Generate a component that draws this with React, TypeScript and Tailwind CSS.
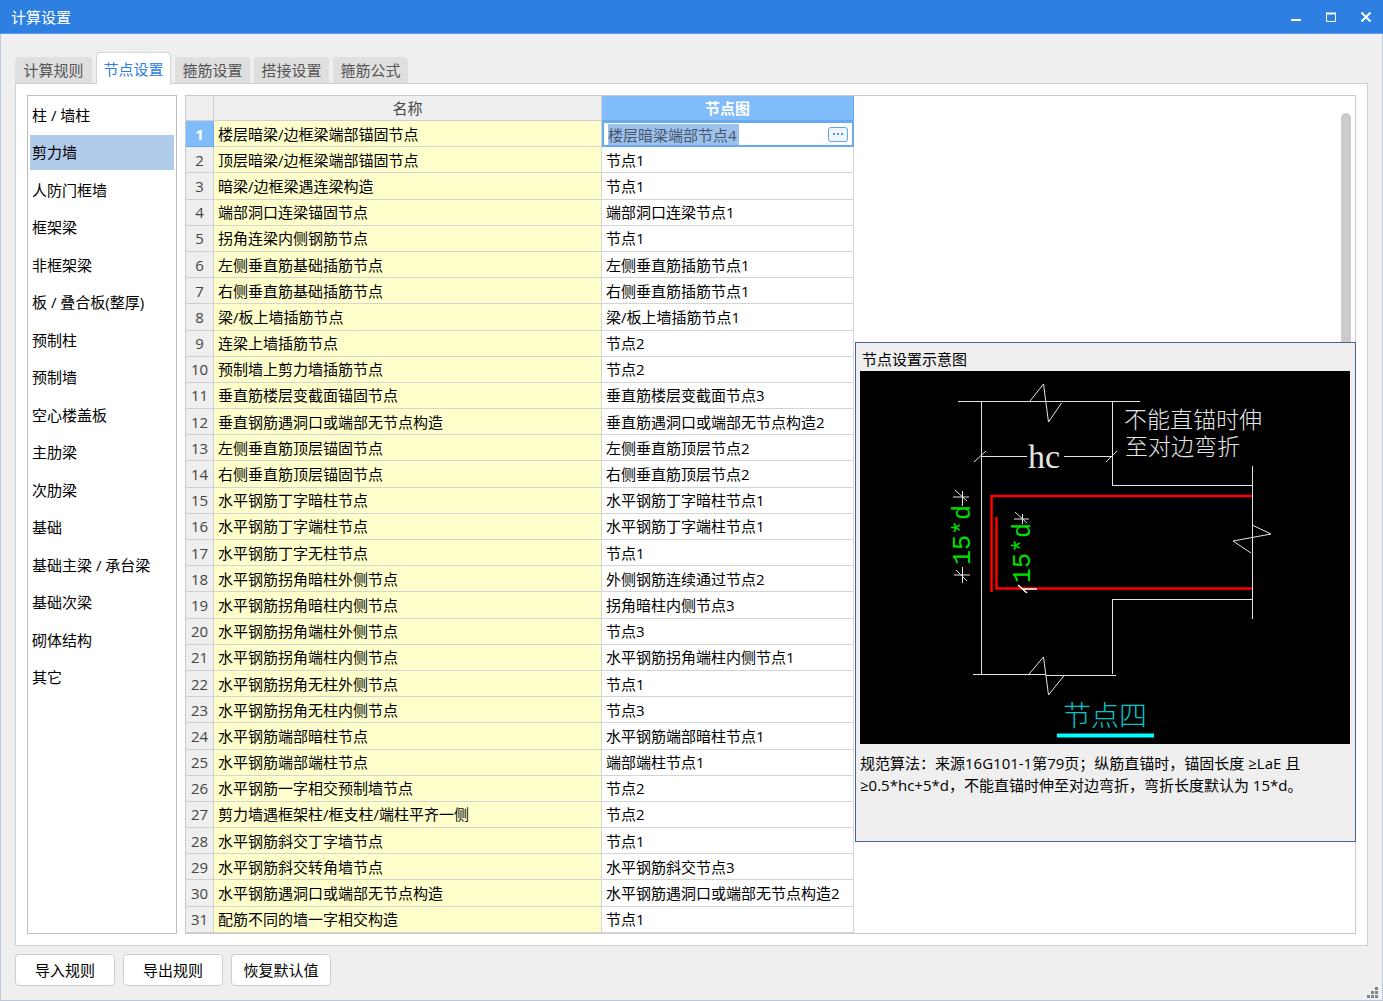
import React from 'react';

interface NodeRow {
  name: string;
  node: string;
}

const tabs = ['计算规则', '节点设置', '箍筋设置', '搭接设置', '箍筋公式'];

const categories = [
  '柱 / 墙柱',
  '剪力墙',
  '人防门框墙',
  '框架梁',
  '非框架梁',
  '板 / 叠合板(整厚)',
  '预制柱',
  '预制墙',
  '空心楼盖板',
  '主肋梁',
  '次肋梁',
  '基础',
  '基础主梁 / 承台梁',
  '基础次梁',
  '砌体结构',
  '其它',
];

const rows: NodeRow[] = [
  { name: '楼层暗梁/边框梁端部锚固节点', node: '楼层暗梁端部节点4' },
  { name: '顶层暗梁/边框梁端部锚固节点', node: '节点1' },
  { name: '暗梁/边框梁遇连梁构造', node: '节点1' },
  { name: '端部洞口连梁锚固节点', node: '端部洞口连梁节点1' },
  { name: '拐角连梁内侧钢筋节点', node: '节点1' },
  { name: '左侧垂直筋基础插筋节点', node: '左侧垂直筋插筋节点1' },
  { name: '右侧垂直筋基础插筋节点', node: '右侧垂直筋插筋节点1' },
  { name: '梁/板上墙插筋节点', node: '梁/板上墙插筋节点1' },
  { name: '连梁上墙插筋节点', node: '节点2' },
  { name: '预制墙上剪力墙插筋节点', node: '节点2' },
  { name: '垂直筋楼层变截面锚固节点', node: '垂直筋楼层变截面节点3' },
  { name: '垂直钢筋遇洞口或端部无节点构造', node: '垂直筋遇洞口或端部无节点构造2' },
  { name: '左侧垂直筋顶层锚固节点', node: '左侧垂直筋顶层节点2' },
  { name: '右侧垂直筋顶层锚固节点', node: '右侧垂直筋顶层节点2' },
  { name: '水平钢筋丁字暗柱节点', node: '水平钢筋丁字暗柱节点1' },
  { name: '水平钢筋丁字端柱节点', node: '水平钢筋丁字端柱节点1' },
  { name: '水平钢筋丁字无柱节点', node: '节点1' },
  { name: '水平钢筋拐角暗柱外侧节点', node: '外侧钢筋连续通过节点2' },
  { name: '水平钢筋拐角暗柱内侧节点', node: '拐角暗柱内侧节点3' },
  { name: '水平钢筋拐角端柱外侧节点', node: '节点3' },
  { name: '水平钢筋拐角端柱内侧节点', node: '水平钢筋拐角端柱内侧节点1' },
  { name: '水平钢筋拐角无柱外侧节点', node: '节点1' },
  { name: '水平钢筋拐角无柱内侧节点', node: '节点3' },
  { name: '水平钢筋端部暗柱节点', node: '水平钢筋端部暗柱节点1' },
  { name: '水平钢筋端部端柱节点', node: '端部端柱节点1' },
  { name: '水平钢筋一字相交预制墙节点', node: '节点2' },
  { name: '剪力墙遇框架柱/框支柱/端柱平齐一侧', node: '节点2' },
  { name: '水平钢筋斜交丁字墙节点', node: '节点1' },
  { name: '水平钢筋斜交转角墙节点', node: '水平钢筋斜交节点3' },
  { name: '水平钢筋遇洞口或端部无节点构造', node: '水平钢筋遇洞口或端部无节点构造2' },
  { name: '配筋不同的墙一字相交构造', node: '节点1' },
];

const TitleBar: React.FC = () => (
  <header className="flex h-[34px] shrink-0 items-center justify-between border-b border-[#5b9ce8] bg-[#2d80e2] pl-[11px] text-white">
    <h1>计算设置</h1>
    <div className="flex">
      <button aria-label="最小化" className="flex h-8 w-[35px] items-center justify-center">
        <svg width="12" height="12" viewBox="0 0 12 12" fill="none">
          <path d="M1 9h10" stroke="currentColor" strokeWidth="2" />
        </svg>
      </button>
      <button aria-label="最大化" className="flex h-8 w-[35px] items-center justify-center">
        <svg width="12" height="12" viewBox="0 0 12 12" fill="none" stroke="currentColor">
          <path d="M1.5 2v8.5h9V2" />
          <path d="M1 2.5h10" strokeWidth="2" />
        </svg>
      </button>
      <button aria-label="关闭" className="flex h-8 w-[35px] items-center justify-center">
        <svg width="12" height="12" viewBox="0 0 12 12" fill="none">
          <path d="M1.500 1.500l9 9M10.500 1.500l-9 9" stroke="currentColor" strokeWidth="2" />
        </svg>
      </button>
    </div>
  </header>
);

const NodeDiagram: React.FC = () => (
  <svg viewBox="860 371 490 373" className="block w-full bg-black" role="img" aria-label="节点四">
    {/* Column and beam outline */}
    <g fill="none" stroke="#e4e4e4" shapeRendering="crispEdges">
      <path d="M958 401.500H1140M981.500 401.500V674M1112.500 401.500V485.500H1252M1252.500 466V619M1252 599.500H1112.500V674M973 674.500H1046M1046 675.500H1116" />
      <path d="M981 456.500H1027M1064 456.500H1112" />
    </g>
    {/* Break marks and dimension ticks */}
    <g fill="none" stroke="#e4e4e4">
      <path d="M1030 401l13.500-17 5 38 13-19" />
      <path d="M1029 674l14.500-17 5 38 16-20" />
      <path d="M1252 525l19 9-38 7 18 12" />
      <path d="M974 462l12-11M1106 462l11-11" />
      <path d="M953 497h16M962.500 491v15M955 490l12 11" />
      <path d="M954 575h16M962.500 567v16M956 570l11 11" />
      <path d="M1014 519h15M1022.500 514v10M1015 512l12 11" />
    </g>
    {/* Rebar */}
    <g fill="none" stroke="#ff0000" strokeWidth="2.500">
      <path d="M1252 496H991.500V592" />
      <path d="M996.500 517V588.500H1252" />
    </g>
    <path d="M1022 589h15M1018 585l9 8" stroke="#ffffff" strokeWidth="1.500" />
    <text x="1028" y="468" fontSize="34" fill="#e4e4e4" className="font-['Liberation_Serif',serif]">hc</text>
    <g fontSize="25" fill="#00e000" className="font-['Liberation_Mono',monospace]">
      <text transform="translate(970 565) rotate(-90)">15*d</text>
      <text transform="translate(1030 583) rotate(-90)">15*d</text>
    </g>
    <g fontSize="23" fill="#e4e4e4" className="font-['Liberation_Serif','Noto_Sans_CJK_SC',sans-serif] font-light">
      <text x="1124" y="428">不能直锚时伸</text>
      <text x="1125" y="455">至对边弯折</text>
    </g>
    <text x="1063" y="726" fontSize="28" fill="#00c8c8" className="font-['Noto_Sans_CJK_SC',sans-serif] font-light">节点四</text>
    <path d="M1057 735.500h97" stroke="#00ffff" strokeWidth="4" />
  </svg>
);

const NodePreview: React.FC = () => (
  <aside className="absolute top-[246px] -right-px h-[500px] w-[501px] border border-[#46648f] bg-[#efefef] pr-[5px] pl-1">
    <h2 className="flex h-7 items-center px-0.5 pt-1">节点设置示意图</h2>
    <NodeDiagram />
    <p className="pt-2 leading-[22px]">
      规范算法：来源16G101-1第79页；纵筋直锚时，锚固长度 ≥LaE 且
      <br />
      ≥0.5*hc+5*d，不能直锚时伸至对边弯折，弯折长度默认为 15*d。
    </p>
  </aside>
);

const NodeTable: React.FC = () => (
  <table className="h-full w-[668px] table-fixed border-separate border-spacing-0">
    <colgroup>
      <col className="w-[28px]" />
      <col className="w-[388px]" />
      <col className="w-[252px]" />
    </colgroup>
    <thead>
      <tr className="h-[25px]">
        <th className="border-r border-b border-[#cfcfcf] bg-[#efefef] p-0" />
        <th className="border-r border-b border-[#cfcfcf] bg-[#efefef] p-0 font-normal text-[#444]">名称</th>
        <th className="border-r border-b border-[#67aaf0] bg-[#80bbfa] p-0 font-bold text-white">节点图</th>
      </tr>
    </thead>
    <tbody>
      {rows.map((row, i) => (
        <tr key={row.name} className="h-[26px]">
          <th
            scope="row"
            className={`border-r border-b p-0 ${
              i === 0
                ? 'border-[#67aaf0] bg-[#80bbfa] font-bold text-white'
                : 'border-[#cfcfcf] bg-[#efefef] font-normal text-[#444]'
            }`}
          >
            {i + 1}
          </th>
          <td className="border-r border-b border-[#d4d4d4] bg-[#ffffcc] py-0 pr-0 pl-1">{row.name}</td>
          {i === 0 ? (
            <td className="border-2 border-[#67aaf0] bg-white p-0">
              <div className="flex items-center justify-between pr-1 pl-1">
                <input
                  aria-label="节点图"
                  defaultValue={row.node}
                  className="h-[21px] w-[131px] bg-[#9dc1ed] text-[#46566c] outline-none"
                />
                <button
                  aria-label="选择节点"
                  className="flex h-[15px] w-5 items-center justify-center gap-0.5 rounded-[3px] border border-[#5ba8e8] bg-[#f0f6fc]"
                >
                  <span className="size-0.5 bg-[#4b97d8]" />
                  <span className="size-0.5 bg-[#4b97d8]" />
                  <span className="size-0.5 bg-[#4b97d8]" />
                </button>
              </div>
            </td>
          ) : (
            <td className="border-r border-b border-[#d4d4d4] bg-white py-0 pr-0 pl-1">{row.node}</td>
          )}
        </tr>
      ))}
    </tbody>
  </table>
);

export default function App() {
  const [activeTab, setActiveTab] = React.useState(1);
  const [category, setCategory] = React.useState(1);

  return (
    <div className="flex h-screen min-h-[900px] flex-col bg-[#efefef] font-['Open_Sans','Noto_Sans_CJK_SC',sans-serif] text-[15px] leading-5 text-black">
      <TitleBar />

      <div className="flex min-h-0 flex-1 flex-col border-x border-b border-[#bcc8d8] px-3.5 pt-[18px]">
        {/* Tabs */}
        <div role="tablist" className="flex items-end gap-1">
          {tabs.map((tab, i) => (
            <button
              key={tab}
              role="tab"
              aria-selected={i === activeTab}
              onClick={() => setActiveTab(i)}
              className={`w-[75px] rounded-t first:w-[77px] ${
                i === activeTab
                  ? 'z-10 -mb-px h-8 border border-b-0 border-[#d2d4d7] bg-white text-[#2d80e2]'
                  : 'h-[26px] bg-[#dfdfdf] text-[#555]'
              }`}
            >
              {tab}
            </button>
          ))}
        </div>

        <main className="flex min-h-0 flex-1 gap-2 border border-[#cdd0d4] bg-white p-[11px]">
          {/* Component categories */}
          <nav className="w-[150px] shrink-0 border border-[#bdbdbd] bg-white px-0.5">
            <ul className="grid h-[600px] auto-rows-fr">
              {categories.map((item, i) => (
                <li key={item} className="py-px">
                  <button
                    onClick={() => setCategory(i)}
                    className={`h-full w-full px-0.5 text-left ${i === category ? 'bg-[#b1cbed]' : ''}`}
                  >
                    {item}
                  </button>
                </li>
              ))}
            </ul>
          </nav>

          <section className="relative min-w-0 flex-1 border border-[#c9c9c9] bg-white">
            <NodeTable />
            <div className="absolute top-[17px] right-1 h-[400px] w-2.5 rounded-full bg-[#cbcbcb]" />
            <NodePreview />
          </section>
        </main>

        {/* Actions */}
        <footer className="flex h-[54px] shrink-0 items-start gap-2 pt-2">
          <button className="h-8 w-[100px] rounded border border-[#cdcdcd] bg-white">导入规则</button>
          <button className="h-8 w-[100px] rounded border border-[#cdcdcd] bg-white">导出规则</button>
          <button className="h-8 w-[100px] rounded border border-[#cdcdcd] bg-white">恢复默认值</button>
          <svg width="11" height="11" viewBox="0 0 11 11" className="-mr-2.5 mb-0.5 ml-auto self-end" fill="#7d838b">
            <path d="M8 0h3v3h-3zM4 4h3v3h-3zM8 4h3v3h-3zM0 8h3v3h-3zM4 8h3v3h-3zM8 8h3v3h-3z" />
          </svg>
        </footer>
      </div>
    </div>
  );
}
